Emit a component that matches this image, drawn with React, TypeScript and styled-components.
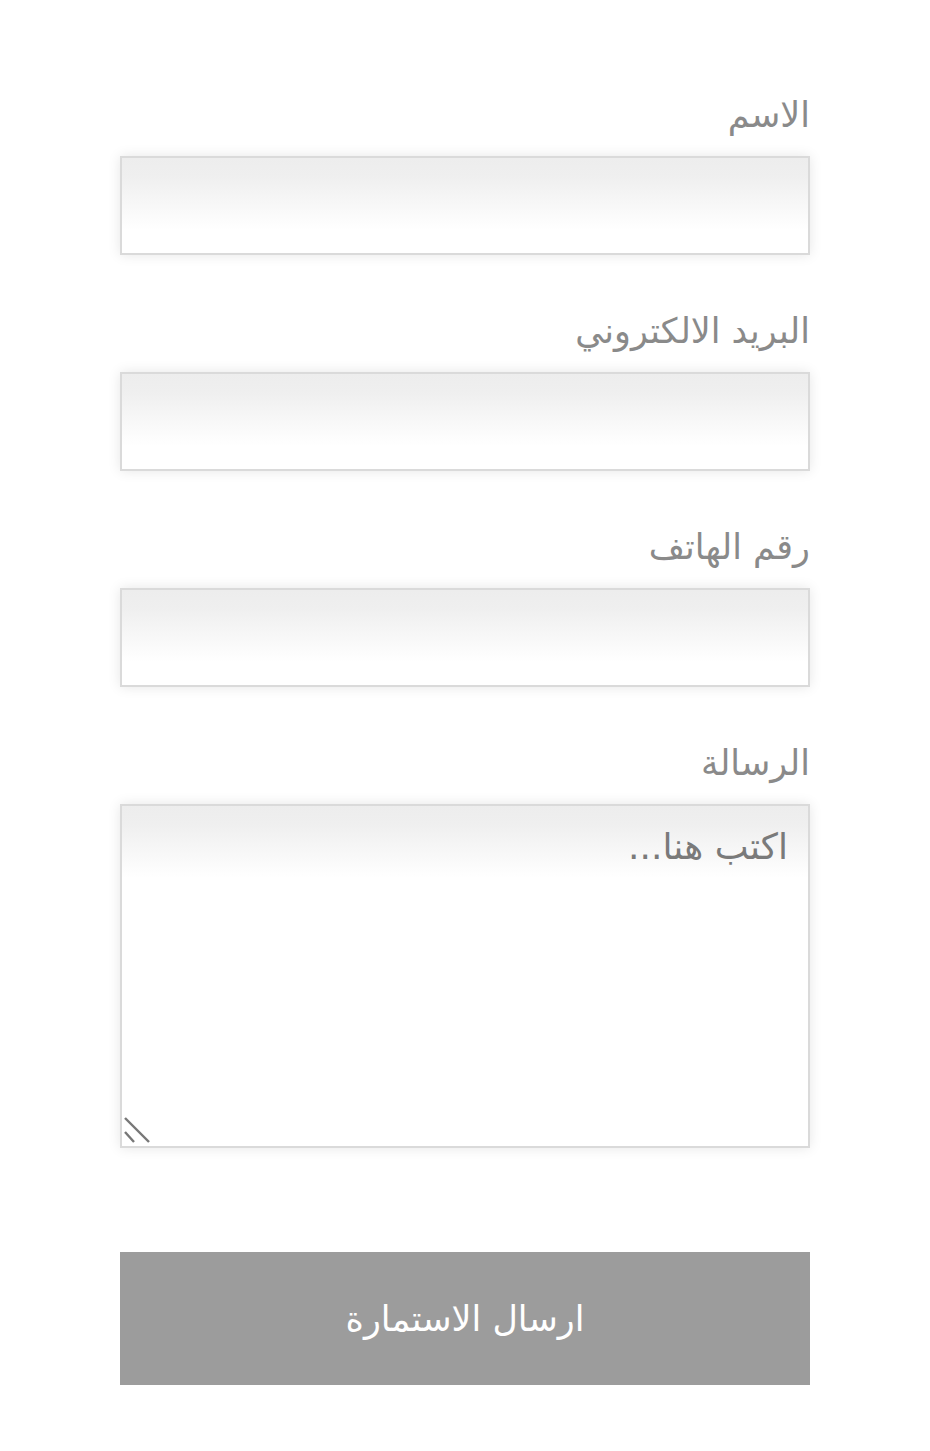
import React from "react";
import styled, { createGlobalStyle } from "styled-components";

const Global = createGlobalStyle`
  html, body { margin: 0; padding: 0; background: #fff; }
  body { font-family: "DejaVu Sans", "Liberation Sans", Arial, sans-serif; }
`;

const Form = styled.form`
  direction: rtl;
  width: 690px;
  margin: 0 auto;
  padding-top: 95px;
  display: flex;
  flex-direction: column;
`;

const Field = styled.div`
  display: flex;
  flex-direction: column;
  margin-bottom: 56px;
`;

const Label = styled.label`
  font-size: 35px;
  line-height: 40px;
  color: #8a8a8a;
  margin-bottom: 21px;
`;

const fieldStyle = `
  box-sizing: border-box;
  display: block;
  width: 100%;
  border: 2px solid #dadada;
  background: linear-gradient(to bottom, #ededed 0px, #efefef 18px, #ffffff 72px, #ffffff 100%);
  box-shadow: 0 0 12px rgba(0, 0, 0, 0.1);
  outline: none;
  font-family: "DejaVu Sans", "Liberation Sans", Arial, sans-serif;
  font-size: 36px;
  color: #666;
  margin: 0;
`;

const Input = styled.input`
  ${fieldStyle}
  height: 99px;
  padding: 0 20px;
`;

const AreaWrap = styled.div`
  position: relative;
`;

const TextArea = styled.textarea`
  ${fieldStyle}
  height: 344px;
  padding: 20px 20px;
  resize: none;
  &::placeholder { color: #7a7a7a; }
`;

const Grip = styled.svg`
  position: absolute;
  left: 4px;
  bottom: 4px;
  width: 28px;
  height: 28px;
  pointer-events: none;
`;

const Submit = styled.button`
  margin-top: 48px;
  height: 133px;
  width: 100%;
  border: none;
  background: #9c9c9c;
  color: #fff;
  font-size: 35px;
  font-family: "DejaVu Sans", "Liberation Sans", Arial, sans-serif;
  padding: 0;
`;

export default function App() {
  return (
    <>
      <Global />
      <Form onSubmit={(e) => e.preventDefault()}>
        <Field>
          <Label>الاسم</Label>
          <Input type="text" />
        </Field>
        <Field>
          <Label>البريد الالكتروني</Label>
          <Input type="email" />
        </Field>
        <Field>
          <Label>رقم الهاتف</Label>
          <Input type="tel" />
        </Field>
        <Field>
          <Label>الرسالة</Label>
          <AreaWrap>
            <TextArea placeholder="اكتب هنا..." />
            <Grip viewBox="0 0 28 28">
              <line x1="1" y1="2" x2="25" y2="26" stroke="#777" strokeWidth="2.4" />
              <line x1="1" y1="16" x2="10" y2="26" stroke="#777" strokeWidth="2.4" />
            </Grip>
          </AreaWrap>
        </Field>
        <Submit type="submit">ارسال الاستمارة</Submit>
      </Form>
    </>
  );
}
